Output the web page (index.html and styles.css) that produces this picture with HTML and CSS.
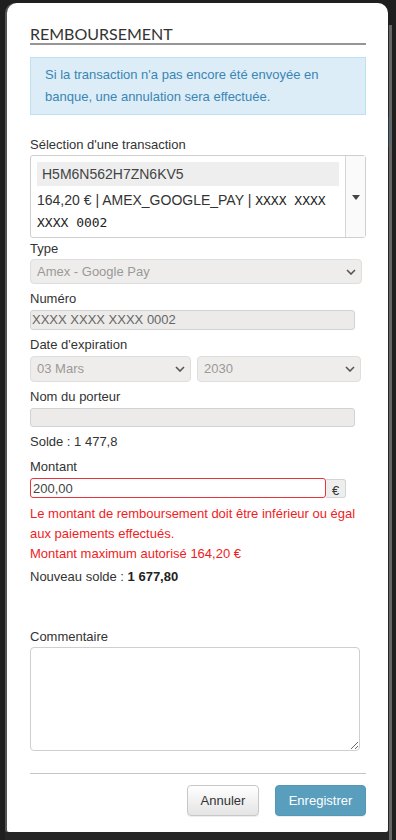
FILE: index.html
```html
<!DOCTYPE html>
<html lang="fr">
<head>
    <meta charset="UTF-8">
    <meta name="viewport" content="width=device-width, initial-scale=1.0">
    <title>Remboursement</title>
    <link rel="stylesheet" href="styles.css">
</head>
<body>

<div class="page-behind">
    <div class="page-bar"></div>
</div>

<div class="modal">
    <h3 class="modal-title">REMBOURSEMENT</h3>

    <div class="alert-info">
        Si la transaction n'a pas encore été envoyée en banque, une annulation sera effectuée.
    </div>

    <label class="field-label tx-label">Sélection d'une transaction</label>
    <div class="tx-select">
        <div class="tx-main">
            <div class="tx-id">H5M6N562H7ZN6KV5</div>
            <div class="tx-desc">164,20 € | AMEX_GOOGLE_PAY | <span class="mono">XXXX XXXX</span><br><span class="mono">XXXX 0002</span></div>
        </div>
        <div class="tx-arrow">
            <svg width="8" height="5" viewBox="0 0 8 5"><path d="M0 0H8L4 5Z" fill="#444"/></svg>
        </div>
    </div>

    <label class="field-label type-label">Type</label>
    <div class="fake-select type-select">
        <span>Amex - Google Pay</span>
        <svg class="chevron" width="10" height="6" viewBox="0 0 10 6"><path d="M1 1L5 5L9 1" fill="none" stroke="#555" stroke-width="1.6"/></svg>
    </div>

    <label class="field-label">Numéro</label>
    <div class="fake-input">XXXX XXXX XXXX 0002</div>

    <label class="field-label">Date d'expiration</label>
    <div class="date-row">
        <div class="fake-select month-select">
            <span>03 Mars</span>
            <svg class="chevron" width="10" height="6" viewBox="0 0 10 6"><path d="M1 1L5 5L9 1" fill="none" stroke="#555" stroke-width="1.6"/></svg>
        </div>
        <div class="fake-select year-select">
            <span>2030</span>
            <svg class="chevron" width="10" height="6" viewBox="0 0 10 6"><path d="M1 1L5 5L9 1" fill="none" stroke="#555" stroke-width="1.6"/></svg>
        </div>
    </div>

    <label class="field-label">Nom du porteur</label>
    <div class="fake-input holder-input"></div>

    <p class="solde">Solde : 1 477,8</p>

    <label class="field-label amount-label">Montant</label>
    <div class="amount-row">
        <input type="text" class="amount-input" value="200,00">
        <span class="addon">€</span>
    </div>

    <div class="error-text">
        <p>Le montant de remboursement doit être inférieur ou égal aux paiements effectués.</p>
        <p>Montant maximum autorisé 164,20 €</p>
    </div>

    <p class="new-solde">Nouveau solde : <b>1 677,80</b></p>

    <label class="field-label comment-label">Commentaire</label>
    <textarea class="comment"></textarea>

    <hr class="divider">

    <div class="modal-footer">
        <button class="btn">Annuler</button>
        <button class="btn btn-save">Enregistrer</button>
    </div>
</div>

</body>
</html>
```

FILE: styles.css
```css
body {
    margin: 0;
    background-color: #1f1f1f;
    font: 13px 'Liberation Sans', Arial, sans-serif;
    color: #333;
    height: 840px;
    overflow: hidden;
}

.page-behind {
    box-sizing: border-box;
    margin: 25px 4px 0 0;
    height: 815px;
    background-color: #262626;
    border-left: 5px solid #1f1f1f;
    border-right: 3px solid #666;
    padding-top: 92px;
}

.page-bar {
    height: 30px;
    background: linear-gradient(90deg, #3b4716 50%, #173a54 50%);
}

.modal {
    position: absolute;
    top: 3px;
    left: 7px;
    width: 381px;
    height: 829px;
    box-sizing: border-box;
    background-color: #fff;
    border-radius: 10px 10px 2px 2px;
    box-shadow: -2px 0 0 #555;
    padding: 21px 22px 0 23px;
}

.modal-title {
    margin: 0;
    font: 400 16px Lato, sans-serif;
    line-height: 19px;
    color: #333;
    border-bottom: 2px solid #959595;
}

.alert-info {
    margin-top: 12px;
    background-color: #dcedf8;
    border: 1px solid #bfe0f2;
    color: #3a85b3;
    line-height: 22px;
    padding: 6px 14px;
}

.field-label {
    display: block;
    line-height: 18px;
    margin-top: 6px;
    margin-bottom: 2px;
}

.tx-label {
    margin-top: 21px;
    margin-bottom: 1px;
}

.tx-select {
    display: flex;
    height: 83px;
    box-sizing: border-box;
    border: 1px solid #cfcfcf;
    border-radius: 3px;
}

.tx-main {
    flex: 1;
    padding: 6px 6px 0 6px;
}

.tx-id {
    background-color: #eee;
    height: 24px;
    line-height: 24px;
    padding-left: 5px;
    font-size: 14px;
    color: #444;
}

.tx-desc {
    margin-top: 3px;
    font-size: 14px;
    line-height: 22px;
    color: #333;
}

.mono {
    font: 13px 'DejaVu Sans Mono', monospace;
    line-height: 16px;
    color: #222;
}

.tx-arrow {
    width: 19px;
    border-left: 1px solid #d6d6d6;
    background-color: #fafafa;
    display: flex;
    align-items: center;
    justify-content: center;
    padding-top: 2px;
}

.type-label {
    margin-top: 2px;
    margin-bottom: 1px;
}

.fake-select {
    display: flex;
    align-items: center;
    justify-content: space-between;
    height: 25px;
    box-sizing: border-box;
    padding: 0 5px 0 6px;
    background-color: #efedeb;
    border: 1px solid #dedede;
    border-radius: 4px;
    color: #999;
}

.type-select {
    width: 332px;
}

.fake-select span {
    line-height: 18px;
}

.fake-input {
    width: 325px;
    height: 20px;
    box-sizing: border-box;
    background-color: #ecebe9;
    border: 1px solid #d2d2d2;
    border-radius: 3px;
    color: #666;
    line-height: 18px;
    padding: 0 0 0 1px;
}

.date-row {
    display: flex;
    gap: 6px;
}

.date-row .fake-select {
    height: 26px;
}

.month-select {
    width: 161px;
}

.year-select {
    width: 164px;
}

.holder-input {
    height: 19px;
}

.solde {
    margin: 6px 0 0;
    line-height: 18px;
}

.amount-label {
    margin-top: 7px;
}

.amount-row {
    display: flex;
    align-items: flex-start;
}

.amount-input {
    width: 296px;
    height: 20px;
    box-sizing: border-box;
    border: 1px solid #e8343a;
    border-radius: 3px;
    padding: 0 2px;
    font: 13px 'Liberation Sans', Arial, sans-serif;
    color: #444;
    outline: none;
}

.addon {
    margin-top: 1px;
    width: 20px;
    height: 19px;
    box-sizing: border-box;
    background-color: #eee;
    border: 1px solid #d4d4d4;
    border-left: 0;
    border-radius: 0 3px 3px 0;
    text-align: center;
    line-height: 21px;
    font-size: 13px;
    color: #333;
}

.error-text {
    margin-top: 6px;
    color: #f01c24;
    line-height: 20px;
}

.error-text p {
    margin: 0;
}

.new-solde {
    margin: 4px 0 0;
    line-height: 18px;
}

.new-solde b {
    color: #222;
}

.comment-label {
    margin-top: 42px;
    margin-bottom: 1px;
}

.comment {
    display: block;
    width: 330px;
    height: 104px;
    box-sizing: border-box;
    border: 1px solid #cfcfcf;
    border-radius: 4px;
    margin: 0;
    resize: vertical;
}

.divider {
    margin: 22px 0 0;
    border: 0;
    border-top: 1px solid #c4c4c4;
}

.modal-footer {
    display: flex;
    justify-content: flex-end;
    gap: 16px;
    margin-top: 11px;
}

.btn {
    width: 72px;
    height: 31px;
    border: 1px solid #c8c8c8;
    border-radius: 4px;
    background: linear-gradient(#fff, #e4e4e4);
    box-shadow: 0 1px 1px rgba(0, 0, 0, 0.08);
    font: 13px 'Liberation Sans', Arial, sans-serif;
    color: #333;
    padding: 0;
}

.btn-save {
    width: 91px;
    background: #5a9ebe;
    border-color: #5597b6;
    color: #fff;
}
```
